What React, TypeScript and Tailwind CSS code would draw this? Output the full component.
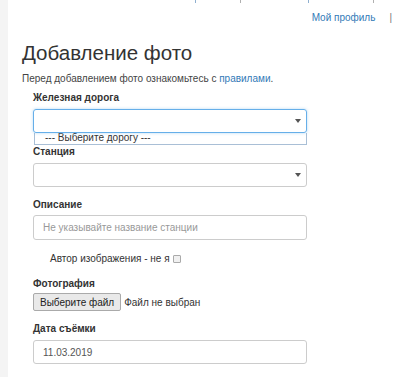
function Caret() {
  return (
    <svg width="6" height="4" viewBox="0 0 6 4" className="absolute right-[5px] top-1/2 -translate-y-1/2">
      <path d="M0 0 L6 0 L3 4 Z" fill="#555" />
    </svg>
  );
}

function Label({ children, className = '' }: { children: React.ReactNode; className?: string }) {
  return <div className={`font-bold text-[10px] text-[#333] leading-[12px] ${className}`}>{children}</div>;
}

export default function App() {
  return (
    <div
      className="relative w-[400px] h-[377px] overflow-hidden bg-white text-[#333] flex"
      style={{ fontFamily: '"Liberation Sans", Arial, sans-serif' }}
    >
      <div className="w-[8px] shrink-0 bg-[#f4f4f4]" />
      <div className="flex-1 flex flex-col">
        {/* bottom edge of the nav row above, cut off by the window */}
        <div className="h-[4px] relative">
          <span className="absolute left-[187px] top-0 w-px h-[3px] bg-[#8fb0d0]" />
          <span className="absolute left-[232px] top-0 w-px h-[3px] bg-[#b0b0b0]" />
          <span className="absolute left-[300px] top-0 w-px h-[3px] bg-[#8fb0d0]" />
          <span className="absolute left-[365px] top-0 w-px h-[3px] bg-[#b0b0b0]" />
        </div>
        <div className="flex justify-end items-center h-[20px] mt-[4px] pr-[8px] text-[10px] leading-[12px]">
          <span className="text-[#337ab7]">Мой профиль</span>
          <span className="ml-[14px] text-[#777]">|</span>
        </div>
        <div className="pl-[14px] mt-[13px]">
          <h1 className="text-[20.5px] leading-[24px] text-[#333]">Добавление фото</h1>
          <p className="text-[10px] leading-[12px] mt-[8px] text-[#444]">
            Перед добавлением фото ознакомьтесь с <span className="text-[#337ab7]">правилами</span>.
          </p>
        </div>
        <div className="pl-[25px] w-[299px] mt-[7px] flex flex-col">
          <Label>Железная дорога</Label>
          <div className="relative mt-[5px] h-[24px] border border-[#66afe9] rounded-[3px] shadow-[0_0_3px_rgba(102,175,233,0.5)]">
            <Caret />
          </div>
          <div className="ml-[1px] h-[12px] border border-t-0 border-[#a9bfd6] text-[10px] leading-[10px] pl-[10px] text-[#333] whitespace-nowrap">
            --- Выберите дорогу ---
          </div>
          <Label className="mt-[1px]">Станция</Label>
          <div className="relative mt-[5px] h-[24px] border border-[#ccc] rounded-[3px]">
            <Caret />
          </div>
          <Label className="mt-[12px]">Описание</Label>
          <div className="mt-[4px] h-[25px] border border-[#ccc] rounded-[3px] flex items-center pl-[9px] text-[10px] text-[#999]">
            Не указывайте название станции
          </div>
          <div className="mt-[13px] pl-[17px] flex items-center text-[10px] leading-[12px] h-[12px] text-[#333]">
            <span>Автор изображения - не я</span>
            <span className="ml-[3px] w-[8px] h-[8px] border border-[#aaa] bg-[#f0f0f0] rounded-[1px] inline-block" />
          </div>
          <Label className="mt-[13px]">Фотография</Label>
          <div className="mt-[3px] flex items-center text-[10px]">
            <span className="h-[18px] px-[6px] flex items-center border border-[#aaa] bg-[#e9e9e9] rounded-[2px] text-[#222]">
              Выберите файл
            </span>
            <span className="ml-[3px] text-[#333]">Файл не выбран</span>
          </div>
          <Label className="mt-[12px]">Дата съёмки</Label>
          <div className="mt-[5px] h-[24px] border border-[#ccc] rounded-[3px] flex items-center pl-[9px] text-[10px] text-[#555]">
            11.03.2019
          </div>
        </div>
      </div>
    </div>
  );
}
